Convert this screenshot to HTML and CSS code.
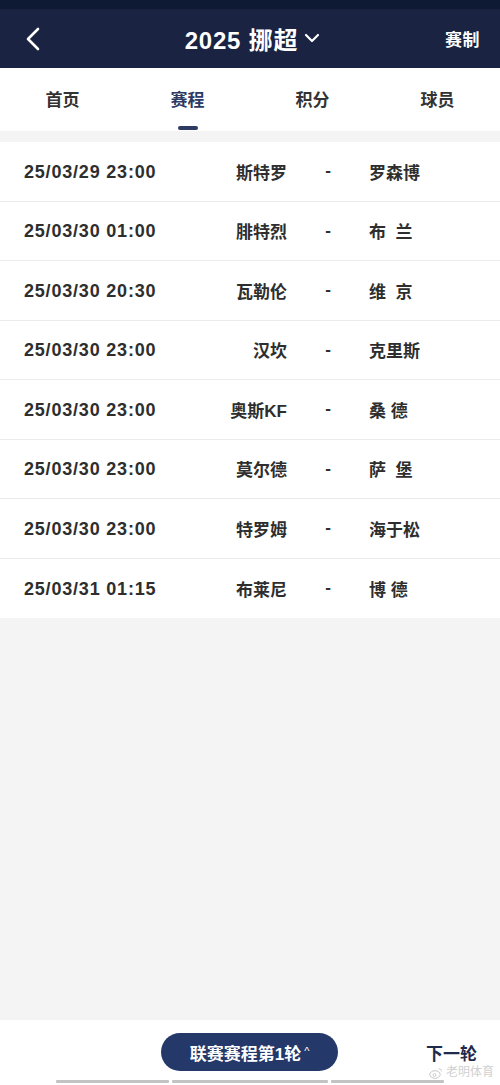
FILE: index.html
```html
<!DOCTYPE html>
<html lang="zh-CN">
  <head>
    <meta charset="utf-8" />
    <meta name="viewport" content="width=device-width, initial-scale=1" />
    <title>2025 挪超 赛程</title>
    <link rel="stylesheet" href="styles.css">
  </head>
  <body>
    <div class="app">
      <!-- top bar -->
      <div class="status"></div>
      <header class="topbar">
        <span class="back">
          <svg width="16" height="24" viewBox="0 0 16 24">
            <path d="M13 2 L3 12 L13 22" fill="none" stroke="#fff" stroke-width="2.6" stroke-linecap="round" stroke-linejoin="round" />
          </svg>
        </span>
        <h1 class="title">2025 挪超
          <svg class="caret" width="16" height="10" viewBox="0 0 16 10">
            <path d="M2 2 L8 8 L14 2" fill="none" stroke="#fff" stroke-width="2.2" stroke-linecap="round" stroke-linejoin="round" />
          </svg>
        </h1>
        <span class="rules">赛制</span>
      </header>

      <!-- tabs -->
      <nav class="tabs">
        <span class="tab">首页</span>
        <span class="tab active">赛程</span>
        <span class="tab">积分</span>
        <span class="tab">球员</span>
      </nav>

      <!-- fixtures -->
      <main class="content">
        <ul class="matches">
          <li class="match"><span class="time">25/03/29 23:00</span><span class="home">斯特罗</span><span class="vs">-</span><span class="away">罗森博</span></li>
          <li class="match"><span class="time">25/03/30 01:00</span><span class="home">腓特烈</span><span class="vs">-</span><span class="away">布&nbsp;&nbsp;兰</span></li>
          <li class="match"><span class="time">25/03/30 20:30</span><span class="home">瓦勒伦</span><span class="vs">-</span><span class="away">维&nbsp;&nbsp;京</span></li>
          <li class="match"><span class="time">25/03/30 23:00</span><span class="home">汉坎</span><span class="vs">-</span><span class="away">克里斯</span></li>
          <li class="match"><span class="time">25/03/30 23:00</span><span class="home">奥斯KF</span><span class="vs">-</span><span class="away">桑 德</span></li>
          <li class="match"><span class="time">25/03/30 23:00</span><span class="home">莫尔德</span><span class="vs">-</span><span class="away">萨&nbsp;&nbsp;堡</span></li>
          <li class="match"><span class="time">25/03/30 23:00</span><span class="home">特罗姆</span><span class="vs">-</span><span class="away">海于松</span></li>
          <li class="match"><span class="time">25/03/31 01:15</span><span class="home">布莱尼</span><span class="vs">-</span><span class="away">博 德</span></li>
        </ul>
      </main>

      <!-- bottom bar -->
      <footer class="bottombar">
        <div class="round-row">
          <span class="spacer"></span>
          <button class="round">联赛赛程第1轮<span class="up">^</span></button>
          <span class="next">下一轮</span>
        </div>
        <div class="scrollbars">
          <span class="bar bar-a"></span>
          <span class="bar bar-b"></span>
          <span class="bar bar-c"></span>
        </div>
        <span class="watermark">
          <svg width="14" height="12" viewBox="0 0 14 12">
            <ellipse cx="6" cy="7.5" rx="5.2" ry="3.8" fill="none" stroke="#c8c8c8" stroke-width="1" />
            <circle cx="5.5" cy="8" r="1.4" fill="none" stroke="#c8c8c8" stroke-width="0.9" />
            <path d="M9.5 1.5 A3 3 0 0 1 12.5 4.5" fill="none" stroke="#c8c8c8" stroke-width="0.9" />
          </svg>
          老明体育
        </span>
      </footer>
    </div>
  </body>
</html>
```

FILE: styles.css
```css
* {
  box-sizing: border-box;
}

body {
  margin: 0;
  background: #f4f4f4;
  font-family: "Liberation Sans", "Noto Sans CJK SC", sans-serif;
  color: #2b2b2b;
}

.app {
  width: 500px;
  height: 1085px;
  display: flex;
  flex-direction: column;
  position: relative;
  overflow: hidden;
}

.status {
  height: 9px;
  background: #0e1934;
}

.topbar {
  height: 59px;
  background: #1a2342;
  display: flex;
  align-items: center;
  justify-content: space-between;
  padding: 0 20px 0 25px;
  color: #fff;
}

.back {
  width: 60px;
  display: flex;
  align-items: center;
}

.title {
  margin: 0;
  font-size: 24px;
  font-weight: bold;
  letter-spacing: 0.8px;
  display: flex;
  align-items: center;
  gap: 6px;
}

.caret {
  margin-top: -2px;
}

.rules {
  font-size: 17px;
  font-weight: bold;
  width: 60px;
  text-align: right;
  letter-spacing: 0.5px;
}

.tabs {
  height: 63px;
  background: #fff;
  display: grid;
  grid-template-columns: repeat(4, 1fr);
}

.tab {
  display: flex;
  align-items: center;
  justify-content: center;
  padding-bottom: 2px;
  font-size: 17px;
  font-weight: bold;
  color: #333;
  position: relative;
}

.tab.active {
  color: #2c3a64;
}

.tab.active::after {
  content: "";
  position: absolute;
  bottom: 1px;
  left: 50%;
  width: 20px;
  height: 4px;
  margin-left: -10px;
  border-radius: 2px;
  background: #2c3a64;
}

.content {
  flex: 1;
  padding-top: 11px;
}

.matches {
  list-style: none;
  margin: 0;
  padding: 0;
  background: #fff;
}

.match {
  height: 59.5px;
  display: flex;
  align-items: center;
  border-bottom: 1px solid #ececec;
  font-size: 17px;
  font-weight: bold;
  color: #2e2e2e;
}

.match:last-child {
  border-bottom: 0;
}

.time {
  width: 200px;
  padding-left: 24px;
  padding-top: 2px;
  font-size: 18px;
  letter-spacing: 0.8px;
}

.home {
  width: 87px;
  text-align: right;
}

.vs {
  width: 82px;
  text-align: center;
}

.away {
  flex: 1;
}

.bottombar {
  height: 65px;
  background: #fff;
  position: relative;
}

.round-row {
  display: grid;
  grid-template-columns: 161px 177px 1fr;
  align-items: center;
  padding-top: 13px;
}

.round {
  height: 38px;
  border: 0;
  border-radius: 19px;
  background: #25386a;
  color: #fff;
  font-family: inherit;
  font-size: 17px;
  font-weight: bold;
  display: flex;
  align-items: center;
  justify-content: center;
  gap: 3px;
  padding: 0;
}

.up {
  font-size: 11px;
  font-weight: normal;
  margin-top: -2px;
}

.next {
  justify-self: end;
  margin-right: 23px;
  font-size: 17px;
  line-height: 20px;
  font-weight: bold;
  color: #1f2b4d;
  margin-top: 6px;
}

.scrollbars {
  display: flex;
  gap: 3px;
  padding-left: 56px;
  margin-top: 9px;
}

.bar {
  height: 3px;
  background: #c3c3c3;
  border-radius: 1px;
}

.bar-a {
  width: 113px;
}

.bar-b {
  width: 156px;
}

.bar-c {
  width: 113px;
}

.watermark {
  position: absolute;
  right: 6px;
  bottom: 6px;
  font-size: 12px;
  line-height: 13px;
  color: #d0d0d0;
  display: flex;
  align-items: center;
  gap: 3px;
}
```
